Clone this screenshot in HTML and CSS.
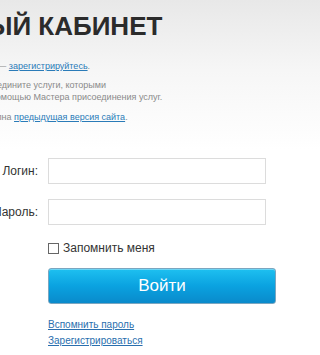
FILE: index.html
```html
<!DOCTYPE html>
<html lang="ru">
<head>
<meta charset="utf-8">
<title>Личный кабинет</title>
<link rel="stylesheet" href="styles.css">
</head>
<body>
<div class="page">
  <h1 class="title">ЛИЧНЫЙ КАБИНЕТ</h1>
  <p class="note note-reg">Если у вас нет логина — <a href="#">зарегистрируйтесь</a>.</p>
  <div class="note-block">
    <p class="note note-l1">Войдите и присоедините услуги, которыми</p>
    <p class="note note-l2">пользуетесь, с помощью Мастера присоединения услуг.</p>
  </div>
  <p class="note note-old">Вам также доступна <a href="#">предыдущая версия сайта</a>.</p>

  <form class="login">
    <label class="lbl" for="login">Логин:</label>
    <input class="field" id="login" type="text">
    <label class="lbl" for="pass">Пароль:</label>
    <input class="field" id="pass" type="password">
    <label class="remember"><span class="box"></span>Запомнить меня</label>
    <button class="submit" type="button">Войти</button>
    <div class="links">
      <a href="#">Вспомнить пароль</a>
      <a href="#">Зарегистрироваться</a>
    </div>
  </form>
</div>
</body>
</html>
```
FILE: styles.css
```css
html, body {
  margin: 0;
  padding: 0;
}
body {
  width: 303px;
  height: 355px;
  overflow: hidden;
  background: linear-gradient(to bottom, #e8e8e8 0, #f6f6f6 70px, #ffffff 150px, #ffffff 100%);
  font-family: "Liberation Sans", Arial, sans-serif;
  color: #333;
}
.page {
  padding-top: 10px;
}
.title {
  margin: 0;
  font-size: 26px;
  line-height: 32px;
  font-weight: bold;
  color: #2b2b2b;
  white-space: nowrap;
  text-indent: -87px;
}
.note {
  margin: 0;
  font-size: 9px;
  line-height: 12px;
  color: #8a8a8a;
  white-space: nowrap;
}
.note a {
  color: #2a7bb8;
  text-decoration: underline;
}
.note-reg {
  margin-top: 18px;
  text-indent: -97px;
}
.note-block {
  margin-top: 7px;
}
.note-l1 {
  text-indent: -73px;
}
.note-l2 {
  text-indent: -72px;
}
.note-old {
  margin-top: 8px;
  text-indent: -73px;
}
.login {
  margin-top: 35px;
  display: grid;
  grid-template-columns: 38px 218px;
  column-gap: 10px;
  row-gap: 15px;
  align-items: center;
}
.lbl {
  justify-self: end;
  font-size: 12px;
  color: #333;
  white-space: nowrap;
}
.field {
  box-sizing: border-box;
  height: 26px;
  width: 218px;
  margin: 0;
  border: 1px solid #dcdcdc;
  background: #fff;
  padding: 0 5px;
}
.remember {
  grid-column: 2;
  display: flex;
  align-items: center;
  gap: 4px;
  font-size: 12px;
  line-height: 16px;
  color: #333;
}
.box {
  width: 9px;
  height: 9px;
  border: 1px solid #666;
  background: #fff;
}
.submit {
  grid-column: 2;
  margin-top: -3px;
  width: 228px;
  height: 36px;
  border: 1px solid #7aa6c0;
  border-radius: 3px;
  background: linear-gradient(to bottom, #1ec0f0 0, #0aa2e0 50%, #0a8acb 100%);
  box-shadow: inset 0 1px 0 rgba(255,255,255,0.35);
  color: #fff;
  font-family: "Liberation Sans", Arial, sans-serif;
  font-size: 17px;
  padding: 0;
}
.links {
  grid-column: 2;
  margin-top: -2px;
  display: flex;
  flex-direction: column;
  align-items: flex-start;
  font-size: 10px;
  line-height: 16px;
}
.links a {
  color: #2a6fae;
  text-decoration: underline;
}
```
